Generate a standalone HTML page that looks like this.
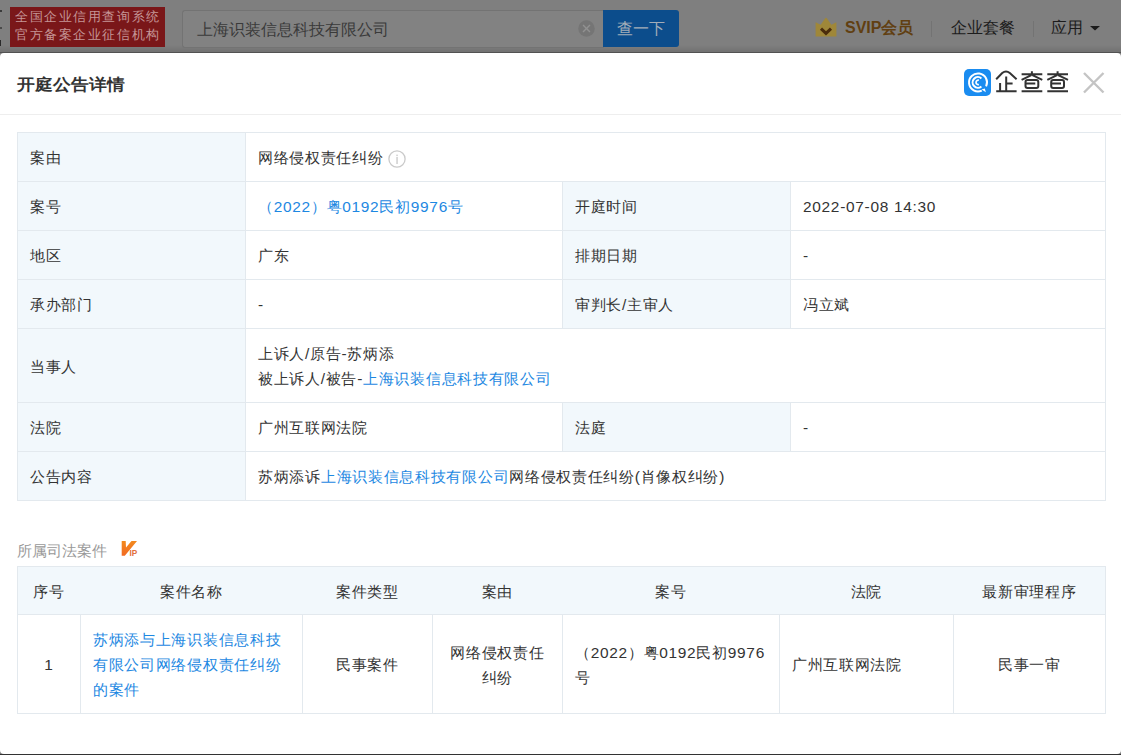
<!DOCTYPE html>
<html><head><meta charset="utf-8">
<style>
*{box-sizing:border-box;margin:0;padding:0}
html,body{width:1121px;height:755px;overflow:hidden}
body{position:relative;-webkit-font-smoothing:antialiased;background:#7f7f7f;font-family:"Liberation Sans",sans-serif;color:#333}
.hdr{position:absolute;left:0;top:0;width:1121px;height:53px;background:linear-gradient(#7f7f7f 0,#7f7f7f 45px,#737373 51px,#737373 52px,#525252 52px)}
.badge{position:absolute;left:10px;top:7px;width:155px;height:40px;background:#7a1719;color:#c59596;font-size:13px;line-height:18.6px;padding:0.6px 0 0 5px;letter-spacing:1.57px;white-space:nowrap}
.search{position:absolute;left:182px;top:10px;width:422px;height:38px;border:1px solid #737373;border-right:none;border-radius:3px 0 0 3px;background:#828282;color:#3a3a3a;font-size:15.75px;line-height:37px;padding-left:14px}
.clr{position:absolute;left:578px;top:20px;width:17px;height:17px;border-radius:50%;background:#959595}
.btn{position:absolute;left:603px;top:10px;width:76px;height:37px;background:#0c4d8c;border-radius:0 3px 3px 0;color:#a3adb8;font-size:16px;line-height:37px;text-align:center}
.nav{position:absolute;top:17px;font-size:16px;line-height:22px;color:#1c1c1c;white-space:nowrap}
.sep{position:absolute;top:21px;width:1px;height:16px;background:#737373}
.modal{position:absolute;left:0;top:53px;width:1121px;height:701px;background:#fff;border-radius:4px}
.bot{position:absolute;left:0;top:754px;width:1121px;height:1px;background:#333}
.mtitle{position:absolute;left:17px;top:76px;font-size:18px;font-weight:bold;line-height:18px;color:#333;transform:scaleY(0.9);transform-origin:0 0}
.mline{position:absolute;left:0;top:114px;width:1121px;height:1px;background:#eee}
.ln{position:absolute;background:#e3e9ee}
.c{position:absolute;display:flex;align-items:center;font-size:15.45px;letter-spacing:0.7px;line-height:25px;color:#333;white-space:normal}
.c>div{width:100%;padding-top:1px}
a{color:#1d88e2;text-decoration:none}
.sec{position:absolute;left:17px;top:539px;font-size:15.45px;line-height:24px;color:#999}
.info{display:inline-block;vertical-align:middle;margin-left:4px;position:relative;top:0px}
</style></head><body>
<div class="hdr">
  <div class="badge">全国企业信用查询系统<br>官方备案企业征信机构</div>
  <div class="search">上海识装信息科技有限公司</div>
  <svg class="clr" width="18" height="18" viewBox="0 0 18 18" style="background:none;left:578px;top:20px;border-radius:0"><circle cx="9" cy="9" r="8.7" fill="#757575"/><path d="M5.3 5.3L12.7 12.7M12.7 5.3L5.3 12.7" stroke="#919191" stroke-width="1.5"/></svg>
  <div class="btn">查一下</div>
  <svg style="position:absolute;left:815px;top:17px" width="22" height="20" viewBox="0 0 22 20"><path d="M0.6 5.2 L5.6 7.8 L10.2 1.2 Q11 0.3 11.8 1.2 L16.4 7.8 L21.4 5.2 L21.4 19.4 L0.6 19.4 Z" fill="#9f8739"/><path d="M6 11.6 L11 16.4 L16 11.6" stroke="#4a2c0c" stroke-width="3" fill="none"/></svg>
  <div class="nav" style="left:845px;top:17px;font-weight:bold;color:#613f12">SVIP会员</div>
  <div class="sep" style="left:931px"></div>
  <div class="nav" style="left:951px">企业套餐</div>
  <div class="sep" style="left:1033px"></div>
  <div class="nav" style="left:1051px">应用</div>
  <svg style="position:absolute;left:1090px;top:26px" width="10" height="5" viewBox="0 0 10 5"><path d="M0 0H10L5 4.5Z" fill="#1c1c1c"/></svg>
  <div style="position:absolute;left:0;top:10px;width:2px;height:2px;background:#3a3a3a"></div>
  <div style="position:absolute;left:0;top:27px;width:2px;height:2px;background:#4a4a4a"></div>
  <div style="position:absolute;left:0;top:40px;width:1px;height:6px;background:#2a2a2a"></div>
</div>
<div class="modal"></div>
<div class="mtitle">开庭公告详情</div>
<div class="mline"></div>
<div class="c" style="left:18px;top:133px;width:227px;height:48px;background:#f2f8fc;justify-content:flex-start;text-align:left;padding:0 12px;"><div>案由</div></div>
<div class="c" style="left:246px;top:133px;width:859px;height:48px;justify-content:flex-start;text-align:left;padding:0 12px;"><div>网络侵权责任纠纷<svg class="info" width="18" height="18" viewBox="0 0 18 18"><circle cx="9" cy="9" r="8.1" stroke="#cacaca" stroke-width="1.3" fill="none"/><rect x="8.3" y="4.6" width="1.5" height="1.5" fill="#cfcfcf"/><rect x="8.3" y="7" width="1.5" height="7" fill="#cfcfcf"/></svg></div></div>
<div class="c" style="left:18px;top:182px;width:227px;height:48px;background:#f2f8fc;justify-content:flex-start;text-align:left;padding:0 12px;"><div>案号</div></div>
<div class="c" style="left:246px;top:182px;width:316px;height:48px;justify-content:flex-start;text-align:left;padding:0 12px;"><div><a>（2022）粤0192民初9976号</a></div></div>
<div class="c" style="left:563px;top:182px;width:227px;height:48px;background:#f2f8fc;justify-content:flex-start;text-align:left;padding:0 12px;"><div>开庭时间</div></div>
<div class="c" style="left:791px;top:182px;width:314px;height:48px;justify-content:flex-start;text-align:left;padding:0 12px;"><div>2022-07-08 14:30</div></div>
<div class="c" style="left:18px;top:231px;width:227px;height:48px;background:#f2f8fc;justify-content:flex-start;text-align:left;padding:0 12px;"><div>地区</div></div>
<div class="c" style="left:246px;top:231px;width:316px;height:48px;justify-content:flex-start;text-align:left;padding:0 12px;"><div>广东</div></div>
<div class="c" style="left:563px;top:231px;width:227px;height:48px;background:#f2f8fc;justify-content:flex-start;text-align:left;padding:0 12px;"><div>排期日期</div></div>
<div class="c" style="left:791px;top:231px;width:314px;height:48px;justify-content:flex-start;text-align:left;padding:0 12px;"><div>-</div></div>
<div class="c" style="left:18px;top:280px;width:227px;height:48px;background:#f2f8fc;justify-content:flex-start;text-align:left;padding:0 12px;"><div>承办部门</div></div>
<div class="c" style="left:246px;top:280px;width:316px;height:48px;justify-content:flex-start;text-align:left;padding:0 12px;"><div>-</div></div>
<div class="c" style="left:563px;top:280px;width:227px;height:48px;background:#f2f8fc;justify-content:flex-start;text-align:left;padding:0 12px;"><div>审判长/主审人</div></div>
<div class="c" style="left:791px;top:280px;width:314px;height:48px;justify-content:flex-start;text-align:left;padding:0 12px;"><div>冯立斌</div></div>
<div class="c" style="left:18px;top:329px;width:227px;height:73px;background:#f2f8fc;justify-content:flex-start;text-align:left;padding:0 12px;"><div>当事人</div></div>
<div class="c" style="left:246px;top:329px;width:859px;height:73px;justify-content:flex-start;text-align:left;padding:0 12px;"><div>上诉人/原告-苏炳添<br>被上诉人/被告-<a>上海识装信息科技有限公司</a></div></div>
<div class="c" style="left:18px;top:403px;width:227px;height:48px;background:#f2f8fc;justify-content:flex-start;text-align:left;padding:0 12px;"><div>法院</div></div>
<div class="c" style="left:246px;top:403px;width:316px;height:48px;justify-content:flex-start;text-align:left;padding:0 12px;"><div>广州互联网法院</div></div>
<div class="c" style="left:563px;top:403px;width:227px;height:48px;background:#f2f8fc;justify-content:flex-start;text-align:left;padding:0 12px;"><div>法庭</div></div>
<div class="c" style="left:791px;top:403px;width:314px;height:48px;justify-content:flex-start;text-align:left;padding:0 12px;"><div>-</div></div>
<div class="c" style="left:18px;top:452px;width:227px;height:48px;background:#f2f8fc;justify-content:flex-start;text-align:left;padding:0 12px;"><div>公告内容</div></div>
<div class="c" style="left:246px;top:452px;width:859px;height:48px;justify-content:flex-start;text-align:left;padding:0 12px;"><div>苏炳添诉<a>上海识装信息科技有限公司</a>网络侵权责任纠纷(肖像权纠纷)</div></div>
<div class="ln" style="left:17px;top:132px;width:1089px;height:1px"></div>
<div class="ln" style="left:17px;top:181px;width:1089px;height:1px"></div>
<div class="ln" style="left:17px;top:230px;width:1089px;height:1px"></div>
<div class="ln" style="left:17px;top:279px;width:1089px;height:1px"></div>
<div class="ln" style="left:17px;top:328px;width:1089px;height:1px"></div>
<div class="ln" style="left:17px;top:402px;width:1089px;height:1px"></div>
<div class="ln" style="left:17px;top:451px;width:1089px;height:1px"></div>
<div class="ln" style="left:17px;top:500px;width:1089px;height:1px"></div>
<div class="ln" style="left:17px;top:132px;width:1px;height:50px"></div>
<div class="ln" style="left:245px;top:132px;width:1px;height:50px"></div>
<div class="ln" style="left:1105px;top:132px;width:1px;height:50px"></div>
<div class="ln" style="left:17px;top:181px;width:1px;height:50px"></div>
<div class="ln" style="left:245px;top:181px;width:1px;height:50px"></div>
<div class="ln" style="left:562px;top:181px;width:1px;height:50px"></div>
<div class="ln" style="left:790px;top:181px;width:1px;height:50px"></div>
<div class="ln" style="left:1105px;top:181px;width:1px;height:50px"></div>
<div class="ln" style="left:17px;top:230px;width:1px;height:50px"></div>
<div class="ln" style="left:245px;top:230px;width:1px;height:50px"></div>
<div class="ln" style="left:562px;top:230px;width:1px;height:50px"></div>
<div class="ln" style="left:790px;top:230px;width:1px;height:50px"></div>
<div class="ln" style="left:1105px;top:230px;width:1px;height:50px"></div>
<div class="ln" style="left:17px;top:279px;width:1px;height:50px"></div>
<div class="ln" style="left:245px;top:279px;width:1px;height:50px"></div>
<div class="ln" style="left:562px;top:279px;width:1px;height:50px"></div>
<div class="ln" style="left:790px;top:279px;width:1px;height:50px"></div>
<div class="ln" style="left:1105px;top:279px;width:1px;height:50px"></div>
<div class="ln" style="left:17px;top:328px;width:1px;height:75px"></div>
<div class="ln" style="left:245px;top:328px;width:1px;height:75px"></div>
<div class="ln" style="left:1105px;top:328px;width:1px;height:75px"></div>
<div class="ln" style="left:17px;top:402px;width:1px;height:50px"></div>
<div class="ln" style="left:245px;top:402px;width:1px;height:50px"></div>
<div class="ln" style="left:562px;top:402px;width:1px;height:50px"></div>
<div class="ln" style="left:790px;top:402px;width:1px;height:50px"></div>
<div class="ln" style="left:1105px;top:402px;width:1px;height:50px"></div>
<div class="ln" style="left:17px;top:451px;width:1px;height:50px"></div>
<div class="ln" style="left:245px;top:451px;width:1px;height:50px"></div>
<div class="ln" style="left:1105px;top:451px;width:1px;height:50px"></div>
<div class="c" style="left:18px;top:567px;width:1087px;height:47px;background:#f2f8fc"></div>
<div class="c" style="left:18px;top:567px;width:62px;height:47px;justify-content:center;text-align:center;padding:0 0px;"><div>序号</div></div>
<div class="c" style="left:81px;top:567px;width:221px;height:47px;justify-content:center;text-align:center;padding:0 0px;"><div>案件名称</div></div>
<div class="c" style="left:303px;top:567px;width:129px;height:47px;justify-content:center;text-align:center;padding:0 0px;"><div>案件类型</div></div>
<div class="c" style="left:433px;top:567px;width:129px;height:47px;justify-content:center;text-align:center;padding:0 0px;"><div>案由</div></div>
<div class="c" style="left:563px;top:567px;width:216px;height:47px;justify-content:center;text-align:center;padding:0 0px;"><div>案号</div></div>
<div class="c" style="left:780px;top:567px;width:173px;height:47px;justify-content:center;text-align:center;padding:0 0px;"><div>法院</div></div>
<div class="c" style="left:954px;top:567px;width:151px;height:47px;justify-content:center;text-align:center;padding:0 0px;"><div>最新审理程序</div></div>
<div class="c" style="left:18px;top:615px;width:62px;height:98px;justify-content:center;text-align:center;padding:0 12px;"><div>1</div></div>
<div class="c" style="left:81px;top:615px;width:221px;height:98px;justify-content:flex-start;text-align:left;padding:0 12px;"><div><a>苏炳添与上海识装信息科技有限公司网络侵权责任纠纷的案件</a></div></div>
<div class="c" style="left:303px;top:615px;width:129px;height:98px;justify-content:center;text-align:center;padding:0 12px;"><div>民事案件</div></div>
<div class="c" style="left:433px;top:615px;width:129px;height:98px;justify-content:center;text-align:center;padding:0 12px;"><div>网络侵权责任纠纷</div></div>
<div class="c" style="left:563px;top:615px;width:216px;height:98px;justify-content:flex-start;text-align:left;padding:0 12px;"><div>（2022）粤0192民初9976号</div></div>
<div class="c" style="left:780px;top:615px;width:173px;height:98px;justify-content:flex-start;text-align:left;padding:0 12px;"><div>广州互联网法院</div></div>
<div class="c" style="left:954px;top:615px;width:151px;height:98px;justify-content:center;text-align:center;padding:0 12px;"><div>民事一审</div></div>
<div class="ln" style="left:17px;top:566px;width:1089px;height:1px"></div>
<div class="ln" style="left:17px;top:614px;width:1089px;height:1px"></div>
<div class="ln" style="left:17px;top:713px;width:1089px;height:1px"></div>
<div class="ln" style="left:17px;top:566px;width:1px;height:148px"></div>
<div class="ln" style="left:1105px;top:566px;width:1px;height:148px"></div>
<div class="ln" style="left:80px;top:614px;width:1px;height:100px"></div>
<div class="ln" style="left:302px;top:614px;width:1px;height:100px"></div>
<div class="ln" style="left:432px;top:614px;width:1px;height:100px"></div>
<div class="ln" style="left:562px;top:614px;width:1px;height:100px"></div>
<div class="ln" style="left:779px;top:614px;width:1px;height:100px"></div>
<div class="ln" style="left:953px;top:614px;width:1px;height:100px"></div>
<div class="sec">所属司法案件</div>
<svg style="position:absolute;left:116px;top:536px" width="26" height="24" viewBox="116 536 26 24"><defs><linearGradient id="vg" x1="0" y1="0" x2="0" y2="1"><stop offset="0" stop-color="#f28a1e"/><stop offset="1" stop-color="#f26a22"/></linearGradient></defs><path d="M121.7 541.1 L125.7 541.1 L126 547.5 L131.5 541.1 L137 541.1 L124.8 555.7 L121.7 555.7 Z" fill="url(#vg)"/><text x="129.6" y="555.8" font-family="Liberation Sans" font-weight="bold" font-size="8.2" fill="#e2703e">IP</text></svg>
<svg style="position:absolute;left:964px;top:69px" width="27" height="27" viewBox="0 0 27 27"><rect x="0" y="0" width="27" height="27" rx="5" fill="#1a8cf0"/>
<path d="M22.1 17.4 A9 9 0 1 0 17.8 21.6" stroke="#fff" stroke-width="2" fill="none"/><path d="M17.6 20.6 L21.9 23.2 L20.8 19.4 Z" fill="#fff"/>
<path d="M17.4 9.4 A5.3 5.3 0 1 0 17.4 17.4" stroke="#fff" stroke-width="2" fill="none"/>
<path d="M14.9 11.3 A2.2 2.2 0 1 0 14.9 15.5" stroke="#fff" stroke-width="1.7" fill="none"/></svg>
<svg style="position:absolute;left:993px;top:66px" width="80" height="32" viewBox="0 0 80 32"><g stroke="#333" stroke-width="2" fill="none" stroke-linecap="butt">
<path d="M3.2 13.2 L9.2 7.1 C11.6 5 14.4 5 16.8 7.1 L23.6 13.2"/><path d="M7.1 17 V25.3 M13.2 10.6 V25.3 M13.2 17.4 H19.6 M3.2 25.3 H23.6"/>
<g id="cha"><path d="M28.6 8.2 H49.3 M38.9 5.2 V9.5 M38.4 9.2 L28.6 13.8 M39.4 9.2 L49.3 13.8 M28.6 25.3 H49.3"/><path d="M42.3 17.5 H33.5 M34.5 13.9 H43.3 Q45.3 13.9 45.3 15.9 V20.1 Q45.3 22.1 43.3 22.1 H34.5 Q32.5 22.1 32.5 20.1 V15.9 Q32.5 13.9 34.5 13.9 Z"/></g>
<use href="#cha" x="25.7"/></g></svg>
<svg style="position:absolute;left:1083px;top:72px" width="22" height="22" viewBox="0 0 22 22"><path d="M1 1 L20.5 20.5 M20.5 1 L1 20.5" stroke="#c4c4c4" stroke-width="2.4"/></svg>
<div class="bot"></div>
</body></html>
